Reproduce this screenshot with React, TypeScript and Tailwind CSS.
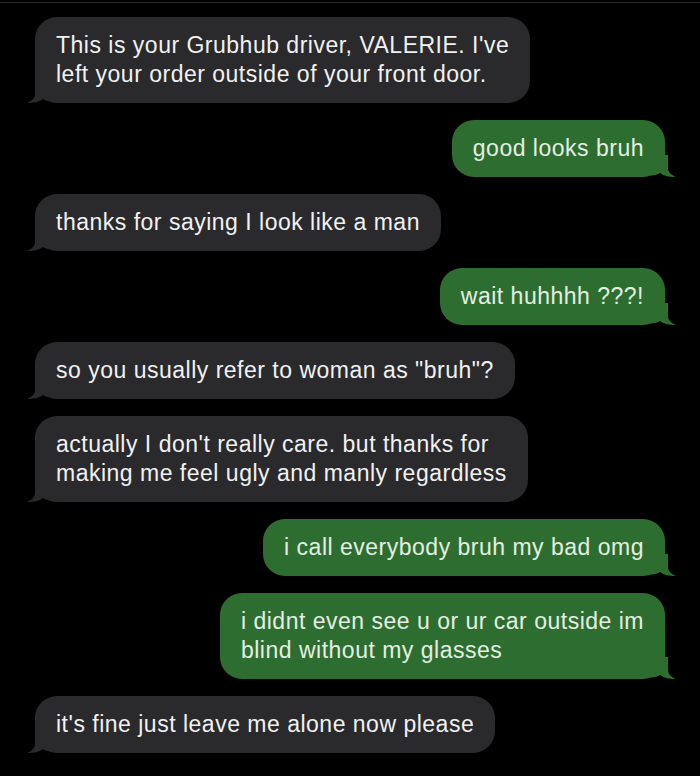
import React from 'react';

type Msg = { from: 'them' | 'me'; lines: string[] };

const messages: Msg[] = [
  { from: 'them', lines: ["This is your Grubhub driver, VALERIE. I've", 'left your order outside of your front door.'] },
  { from: 'me', lines: ['good looks bruh'] },
  { from: 'them', lines: ['thanks for saying I look like a man'] },
  { from: 'me', lines: ['wait huhhhh ???!'] },
  { from: 'them', lines: ['so you usually refer to woman as "bruh"?'] },
  { from: 'them', lines: ["actually I don't really care. but thanks for", 'making me feel ugly and manly regardless'] },
  { from: 'me', lines: ['i call everybody bruh my bad omg'] },
  { from: 'me', lines: ['i didnt even see u or ur car outside im', 'blind without my glasses'] },
  { from: 'them', lines: ["it's fine just leave me alone now please"] },
];

const Tail = ({ side, color }: { side: 'them' | 'me'; color: string }) => {
  if (side === 'them') {
    return (
      <svg className="absolute -left-[8px] bottom-0" width="26" height="22" viewBox="0 0 26 22">
        <path d="M8 0 L8 13 C8 17 5 20 0 22 C7 22 12 21 16 18 C18 19.5 21 20.5 26 20.5 L26 0 Z" fill={color} />
      </svg>
    );
  }
  return (
    <svg className="absolute -right-[11px] bottom-0" width="26" height="22" viewBox="0 0 26 22">
      <path d="M18 0 L18 13 C18 17 21 20 26 22 C19 22 14 21 10 18 C8 19.5 5 20.5 0 20.5 L0 0 Z" fill={color} />
    </svg>
  );
};

const Bubble = ({ msg }: { msg: Msg }) => {
  const me = msg.from === 'me';
  const color = me ? '#2d6e30' : '#2a2a2c';
  return (
    <div className={me ? 'flex justify-end' : 'flex justify-start'}>
      <div
        className={
          me
            ? 'relative rounded-[22px] bg-[#2d6e30] px-[21px] py-[14px] text-[#e4eee2]'
            : 'relative rounded-[22px] bg-[#2a2a2c] px-[21px] py-[14px] text-[#f1f1f1]'
        }
      >
        <Tail side={msg.from} color={color} />
        <div className="relative text-[23px] leading-[29px] tracking-[0.5px] whitespace-nowrap">
          {msg.lines.map((l, i) => (
            <div key={i}>{l}</div>
          ))}
        </div>
      </div>
    </div>
  );
};

export default function App() {
  return (
    <div className="w-[700px] h-[776px] overflow-hidden bg-black" style={{ fontFamily: '"Liberation Sans", Arial, sans-serif' }}>
      <div className="h-[2px]" />
      <div className="h-[1px] bg-[#2a2a2a]" />
      <div className="flex flex-col gap-[17px] px-[35px] pt-[14px]">
        {messages.map((m, i) => (
          <Bubble key={i} msg={m} />
        ))}
      </div>
    </div>
  );
}
